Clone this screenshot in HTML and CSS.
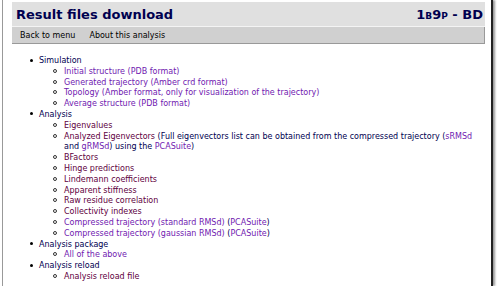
FILE: index.html
```html
<!DOCTYPE html>
<html lang="en">
<head>
    <meta charset="UTF-8" />
    <title>Result files download</title>
<link rel="stylesheet" href="styles.css">
</head>
<body>
    <div class="page">
        <div class="title">
            <h1>Result files download</h1>
            <span class="code"><span class="sc">1b9p</span> - BD</span>
        </div>
        <div class="menu">
            <a href="#">Back to menu</a>
            <a href="#">About this analysis</a>
        </div>
        <ul class="files">
            <li>Simulation
                <ul>
                    <li><a class="v" href="#">Initial structure (PDB format)</a></li>
                    <li><a class="v" href="#">Generated trajectory (Amber crd format)</a></li>
                    <li><a class="v" href="#">Topology (Amber format, only for visualization of the trajectory)</a></li>
                    <li><a class="v" href="#">Average structure (PDB format)</a></li>
                </ul>
            </li>
            <li>Analysis
                <ul>
                    <li><a href="#">Eigenvalues</a></li>
                    <li><a href="#">Analyzed Eigenvectors</a> (Full eigenvectors list can be obtained from the compressed trajectory (<a class="v" href="#">sRMSd</a> and <a class="v" href="#">gRMSd</a>) using the <a class="v" href="#">PCASuite</a>)</li>
                    <li><a href="#">BFactors</a></li>
                    <li><a href="#">Hinge predictions</a></li>
                    <li><a href="#">Lindemann coefficients</a></li>
                    <li><a href="#">Apparent stiffness</a></li>
                    <li><a href="#">Raw residue correlation</a></li>
                    <li><a href="#">Collectivity indexes</a></li>
                    <li><a class="v" href="#">Compressed trajectory (standard RMSd)</a> (<a class="v" href="#">PCASuite</a>)</li>
                    <li><a class="v" href="#">Compressed trajectory (gaussian RMSd)</a> (<a class="v" href="#">PCASuite</a>)</li>
                </ul>
            </li>
            <li>Analysis package
                <ul>
                    <li><a class="v" href="#">All of the above</a></li>
                </ul>
            </li>
            <li>Analysis reload
                <ul>
                    <li><a href="#">Analysis reload file</a></li>
                </ul>
            </li>
        </ul>
    </div>
</body>
</html>
```

FILE: styles.css
```css
* {margin: 0; padding: 0;}
body {
    font-family: "DejaVu Sans", Verdana, sans-serif;
    color: #000050;
    background: #fff;
    overflow: hidden;
}
.page {
    width: 473px;
    height: 284px;
    margin-left: 2px;
    padding: 2px 6px 0 9px;
    border-left: 1px solid #999;
    border-right: 2px solid #222;
    box-shadow: 2px 0 2px #999;
    overflow: hidden;
}
.title {
    display: flex;
    justify-content: space-between;
    align-items: center;
    height: 24px;
    padding: 0 2px 0 4px;
    background: #e0e0e0;
    border-bottom: 1px solid #f4f4f4;
}
.title h1 {
    font-size: 13px;
    color: #000050;
}
.code {
    font-size: 13px;
    font-weight: bold;
    color: #000050;
}
.sc {font-variant: small-caps;}
.menu {
    display: flex;
    gap: 14px;
    height: 16px;
    align-items: center;
    padding-left: 8px;
    background: #d0d0d0;
    border-right: 1px solid #999;
    border-bottom: 1px solid #999;
}
.menu a {
    font-size: 8px;
    color: #000;
    text-decoration: none;
}
.files {
    margin-top: 12px;
    padding-left: 27px;
    font-size: 8px;
    line-height: 10.8px;
    list-style: none;
}
.files li::before {
    content: "";
    display: inline-block;
    width: 3px;
    height: 3px;
    margin: 0 6px 1px -9px;
    border-radius: 50%;
    background: #000;
    vertical-align: middle;
}
.files ul {
    padding-left: 25px;
    list-style: none;
}
.files ul li::before {
    width: 2px;
    height: 2px;
    margin: 0 7px 1px -11px;
    border: 1px solid #333;
    background: none;
}
.files a {
    color: #600040;
    text-decoration: none;
}
.files a.v {
    color: #7020b0;
}
```
